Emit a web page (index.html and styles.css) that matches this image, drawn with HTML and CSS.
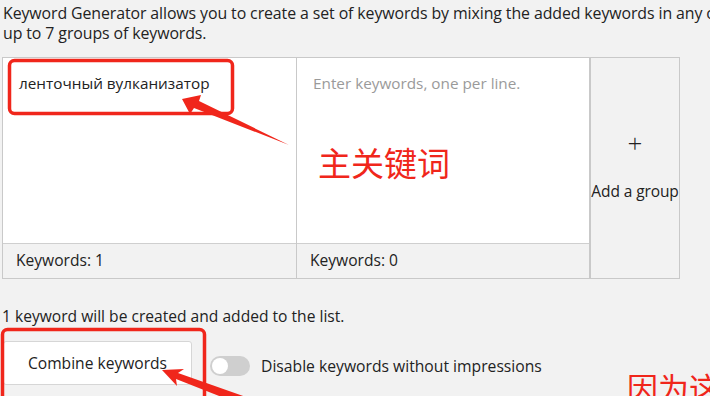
FILE: index.html
```html
<!DOCTYPE html>
<html lang="en">
<head>
<meta charset="utf-8">
<title>Keyword Generator</title>
<link rel="stylesheet" href="styles.css">
</head>
<body>
<div class="page">
  <p class="intro">
    <span class="intro-line">Keyword Generator allows you to create a set of keywords by mixing the added keywords in any order. You can add</span>
    <span class="intro-line">up to 7 groups of keywords.</span>
  </p>

  <div class="groups">
    <div class="group">
      <div class="group-input">ленточный вулканизатор</div>
      <div class="group-footer">Keywords: 1</div>
    </div>
    <div class="group group-next">
      <div class="group-input placeholder">Enter keywords, one per line.</div>
      <div class="group-footer">Keywords: 0</div>
    </div>
    <div class="add-group">
      <span class="add-plus">+</span>
      <span class="add-label">Add a group</span>
    </div>
  </div>

  <p class="summary">1 keyword will be created and added to the list.</p>

  <div class="actions">
    <button class="combine-btn">Combine keywords</button>
    <div class="toggle-row">
      <span class="toggle"><span class="knob"></span></span>
      <span class="toggle-label">Disable keywords without impressions</span>
    </div>
  </div>
</div>

<svg class="annotations" width="710" height="396" viewBox="0 0 710 396">
  <rect x="9.5" y="60.5" width="223" height="53" rx="5" fill="none" stroke="#f0261b" stroke-width="3.5"/>
  <polygon points="182,99 201,95 199,101 289,145 194,108 190,114" fill="#f0261b"/>
  <rect x="2.5" y="329.5" width="202" height="80" rx="5" fill="none" stroke="#f0261b" stroke-width="3.5"/>
  <polygon points="162,370 184,369 178,373 246,397 242,405 176,379 177,386" fill="#f0261b"/>
</svg>
<span class="note note-main">主关键词</span>
<span class="note note-bottom">因为这个</span>
</body>
</html>
```
FILE: styles.css
```css
html, body {
  margin: 0;
  padding: 0;
  background: #f2f2f2;
  overflow: hidden;
  width: 710px;
  height: 396px;
}

body {
  position: relative;
  font-family: "Open Sans", "Noto Sans", Arial, sans-serif;
  color: #222;
  font-size: 15.5px;
}

.page {
  padding: 4px 0 0 2px;
}

.intro {
  margin: -1px 0 14px 1px;
  line-height: 20px;
  font-size: 15.9px;
  letter-spacing: -0.1px;
  color: #222;
}

.intro-line {
  display: block;
  white-space: nowrap;
}

.groups {
  display: flex;
  height: 222px;
}

.group {
  width: 293px;
  border: 1px solid #c9c9c9;
  background: #fff;
  display: flex;
  flex-direction: column;
}

.group-next {
  border-left: none;
  width: 292px;
}

.group-input {
  flex: 1;
  padding: 15px 16px 0 16px;
  line-height: 20px;
  font-size: 15.3px;
  color: #222;
}

.placeholder {
  color: #9a9a9a;
}

.group-footer {
  height: 35px;
  border-top: 1px solid #cfcfcf;
  background: #f2f2f2;
  display: flex;
  align-items: center;
  padding-left: 13px;
  padding-bottom: 2px;
  box-sizing: border-box;
  font-size: 15.6px;
  color: #222;
}

.add-group {
  width: 88px;
  border: 1px solid #c9c9c9;
  background: #f2f2f2;
  display: flex;
  flex-direction: column;
  align-items: center;
  justify-content: center;
  gap: 24px;
  padding-bottom: 4px;
}

.add-plus {
  font-size: 26px;
  font-weight: 300;
  line-height: 26px;
  color: #222;
}

.add-label {
  font-size: 15.5px;
  white-space: nowrap;
  letter-spacing: -0.1px;
  color: #222;
}

.summary {
  margin: 27px 0 0 0;
  line-height: 20px;
  font-size: 15.6px;
  color: #222;
}

.actions {
  display: flex;
  align-items: center;
  margin-top: 15px;
}

.combine-btn {
  width: 189px;
  height: 44px;
  margin-left: 1px;
  background: #fff;
  border: 1px solid #d6d6d6;
  border-radius: 3px;
  font-family: inherit;
  font-size: 15.6px;
  color: #222;
  padding: 0;
}

.toggle-row {
  display: flex;
  align-items: center;
  margin-left: 18px;
  margin-top: 5px;
}

.toggle {
  width: 40px;
  height: 20px;
  border-radius: 10px;
  background: #cfcfcf;
  display: flex;
  align-items: center;
  padding-left: 2px;
  box-sizing: border-box;
}

.knob {
  width: 16px;
  height: 16px;
  border-radius: 50%;
  background: #fff;
}

.toggle-label {
  margin-left: 11px;
  font-size: 15.7px;
  color: #222;
}

.annotations {
  position: absolute;
  left: 0;
  top: 0;
  pointer-events: none;
}

.note {
  position: absolute;
  font-family: "Noto Sans CJK SC", sans-serif;
  color: #f0261b;
  white-space: nowrap;
}

.note-main {
  left: 318px;
  top: 140px;
  font-size: 33px;
  line-height: 44px;
}

.note-bottom {
  left: 627px;
  top: 366px;
  font-size: 31px;
  line-height: 42px;
}
```
